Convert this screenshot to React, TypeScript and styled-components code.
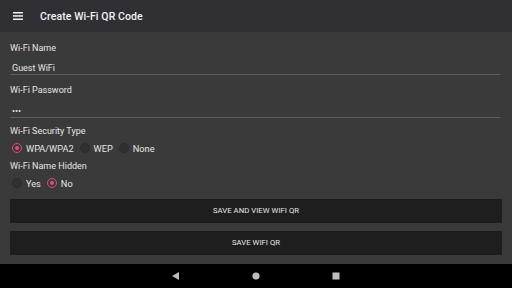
import React from "react";
import styled, { createGlobalStyle } from "styled-components";

const Global = createGlobalStyle`
  html, body { margin: 0; padding: 0; background: #3a3a3a; }
  body { font-family: Roboto, "Noto Sans", sans-serif; -webkit-font-smoothing: antialiased; }
  * { box-sizing: border-box; }
`;

const Screen = styled.div`
  width: 512px;
  height: 288px;
  display: flex;
  flex-direction: column;
  background: #3a3a3a;
  overflow: hidden;
`;

const Toolbar = styled.div`
  height: 32px;
  flex: none;
  background: #303034;
  display: flex;
  align-items: center;
  padding-left: 13px;
  gap: 17px;
  color: #f2f2f2;
`;

const Title = styled.div`
  font-size: 10.5px;
  font-weight: 500;
  letter-spacing: 0.1px;
`;

const Content = styled.div`
  flex: 1;
  display: flex;
  flex-direction: column;
  padding: 10px 10px 0 10px;
`;

const Label = styled.div<{ $mt?: number }>`
  font-size: 9px;
  color: #e6e6e6;
  height: 12px;
  line-height: 12px;
  margin-top: ${(p) => p.$mt ?? 0}px;
`;

const Field = styled.div<{ $mt: number }>`
  margin-top: ${(p) => p.$mt}px;
  height: 12px;
  font-size: 9px;
  color: #e6e6e6;
  padding-left: 2px;
  line-height: 11px;
  border-bottom: 1px solid #5c5c5c;
  margin-right: 2px;
`;

const RadioRow = styled.div<{ $mt?: number }>`
  display: flex;
  align-items: center;
  height: 12px;
  margin-top: ${(p) => p.$mt ?? 0}px;
  padding-left: 2px;
`;

const RadioItem = styled.div`
  display: flex;
  align-items: center;
  gap: 4px;
  margin-right: 6px;
  font-size: 9.2px;
  color: #e6e6e6;
`;

const Dot = styled.span<{ $on?: boolean }>`
  width: 10px;
  height: 10px;
  border-radius: 50%;
  display: inline-flex;
  align-items: center;
  justify-content: center;
  border: 1.5px solid ${(p) => (p.$on ? "#e5477f" : "#2b2b2b")};
  background: ${(p) => (p.$on ? "transparent" : "#303030")};
  &::after {
    content: "";
    width: 4px;
    height: 4px;
    border-radius: 50%;
    background: ${(p) => (p.$on ? "#e5477f" : "transparent")};
  }
`;

const Button = styled.div<{ $mt: number }>`
  height: 24px;
  margin-top: ${(p) => p.$mt}px;
  background: #1e1e1e;
  color: #e8e8e8;
  font-size: 7.7px;
  font-weight: 400;
  display: flex;
  align-items: center;
  justify-content: center;
  letter-spacing: 0.05px;
  padding-bottom: 1px;
`;

const NavBar = styled.div`
  height: 24px;
  flex: none;
  background: #000;
  display: flex;
  align-items: center;
  justify-content: center;
  gap: 72px;
`;

const Radio = ({ on, label }: { on?: boolean; label: string }) => (
  <RadioItem>
    <Dot $on={on} />
    {label}
  </RadioItem>
);

export default function App() {
  return (
    <Screen>
      <Global />
      <Toolbar>
        <svg width="10" height="8" viewBox="0 0 10 8">
          <rect x="0" y="0" width="10" height="1.5" fill="#f2f2f2" />
          <rect x="0" y="3.2" width="10" height="1.5" fill="#f2f2f2" />
          <rect x="0" y="6.5" width="10" height="1.5" fill="#f2f2f2" />
        </svg>
        <Title>Create Wi-Fi QR Code</Title>
      </Toolbar>
      <Content>
        <Label>Wi-Fi Name</Label>
        <Field $mt={9}>Guest WiFi</Field>
        <Label $mt={9}>Wi-Fi Password</Label>
        <Field $mt={10}>•••</Field>
        <Label $mt={7}>Wi-Fi Security Type</Label>
        <RadioRow $mt={5}>
          <Radio on label="WPA/WPA2" />
          <Radio label="WEP" />
          <Radio label="None" />
        </RadioRow>
        <Label $mt={6}>Wi-Fi Name Hidden</Label>
        <RadioRow $mt={5}>
          <Radio label="Yes" />
          <Radio on label="No" />
        </RadioRow>
        <Button $mt={10}>SAVE AND VIEW WIFI QR</Button>
        <Button $mt={8}>SAVE WIFI QR</Button>
      </Content>
      <NavBar>
        <svg width="8" height="8" viewBox="0 0 8 8">
          <path d="M7 0 L0 4 L7 8 Z" fill="#bdbdbd" />
        </svg>
        <svg width="8" height="8" viewBox="0 0 8 8">
          <circle cx="4" cy="4" r="3.6" fill="#bdbdbd" />
        </svg>
        <svg width="8" height="8" viewBox="0 0 8 8">
          <rect x="0.5" y="0.5" width="7" height="7" fill="#bdbdbd" />
        </svg>
      </NavBar>
    </Screen>
  );
}
